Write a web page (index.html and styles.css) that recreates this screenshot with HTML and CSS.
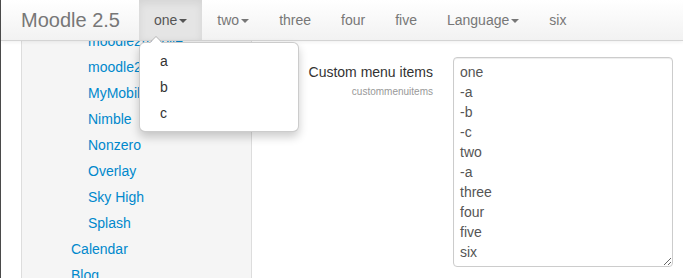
FILE: index.html
```html
<!DOCTYPE html>
<html lang="en">
<head>
    <meta charset="UTF-8">
    <meta name="viewport" content="width=device-width, initial-scale=1.0">
    <title>Moodle 2.5 - Custom menu items</title>
    <link rel="stylesheet" href="styles.css">
</head>
<body>
    <header class="navbar">
        <a class="brand" href="#">Moodle 2.5</a>
        <ul class="nav">
            <li class="nav-item dropdown open">
                <a href="#" class="nav-link active">one<span class="caret"></span></a>
                <ul class="dropdown-menu">
                    <li><a href="#">a</a></li>
                    <li><a href="#">b</a></li>
                    <li><a href="#">c</a></li>
                </ul>
            </li>
            <li class="nav-item"><a href="#" class="nav-link">two<span class="caret"></span></a></li>
            <li class="nav-item"><a href="#" class="nav-link">three</a></li>
            <li class="nav-item"><a href="#" class="nav-link">four</a></li>
            <li class="nav-item"><a href="#" class="nav-link">five</a></li>
            <li class="nav-item"><a href="#" class="nav-link">Language<span class="caret"></span></a></li>
            <li class="nav-item"><a href="#" class="nav-link">six</a></li>
        </ul>
    </header>

    <div class="page">
        <aside class="sidebar">
            <ul class="tree">
                <li class="sub"><a href="#">moodle2mobile</a></li>
                <li class="sub"><a href="#">moodle2theme</a></li>
                <li class="sub"><a href="#">MyMobile</a></li>
                <li class="sub"><a href="#">Nimble</a></li>
                <li class="sub"><a href="#">Nonzero</a></li>
                <li class="sub"><a href="#">Overlay</a></li>
                <li class="sub"><a href="#">Sky High</a></li>
                <li class="sub"><a href="#">Splash</a></li>
                <li><a href="#">Calendar</a></li>
                <li><a href="#">Blog</a></li>
            </ul>
        </aside>

        <main class="content">
            <form class="form-horizontal">
                <div class="control-group">
                    <label class="control-label" for="custommenuitems">
                        Custom menu items
                        <span class="form-shortname">custommenuitems</span>
                    </label>
                    <div class="controls">
                        <textarea id="custommenuitems" rows="10">one
-a
-b
-c
two
-a
three
four
five
six</textarea>
                    </div>
                </div>
            </form>
        </main>
    </div>
</body>
</html>
```

FILE: styles.css
```css
*{
    box-sizing: border-box;
}
body{
    margin: 0;
    height: 278px;
    overflow: hidden;
    font-family: "Liberation Sans", Arial, Helvetica, sans-serif;
    font-size: 14px;
    line-height: 20px;
    color: #333;
    background-color: #fff;
    border-left: 1px solid #4a4a4a;
}
a{
    text-decoration: none;
}
ul{
    list-style: none;
    margin: 0;
    padding: 0;
}

/* barra de navegacao */
.navbar{
    position: relative;
    z-index: 10;
    display: flex;
    align-items: center;
    height: 41px;
    padding-left: 20px;
    background-image: linear-gradient(to bottom, #ffffff, #f2f2f2);
    border-bottom: 1px solid #d4d4d4;
    box-shadow: 0 1px 4px rgba(0, 0, 0, 0.065);
}
.brand{
    font-size: 20px;
    line-height: 20px;
    color: #777;
    padding: 10px 0;
    margin-right: 19px;
}
.nav{
    display: flex;
    height: 40px;
}
.nav-item{
    position: relative;
}
.nav-link{
    display: block;
    padding: 10px 15px;
    color: #777;
    line-height: 20px;
}
.nav-link.active{
    background-color: #e5e5e5;
    color: #555;
    box-shadow: inset 0 3px 8px rgba(0, 0, 0, 0.08);
}
.caret{
    display: inline-block;
    width: 0;
    height: 0;
    margin-left: 2px;
    vertical-align: middle;
    border-top: 4px solid #777;
    border-left: 4px solid transparent;
    border-right: 4px solid transparent;
}
.active .caret{
    border-top-color: #555;
}

/* menu suspenso */
.dropdown-menu{
    position: absolute;
    top: 42px;
    left: 0;
    width: 160px;
    padding: 5px 0;
    background-color: #fff;
    border: 1px solid rgba(0, 0, 0, 0.2);
    border-radius: 6px;
    box-shadow: 0 5px 10px rgba(0, 0, 0, 0.2);
}
.dropdown-menu:before{
    content: "";
    position: absolute;
    top: -7px;
    left: 9px;
    border-left: 7px solid transparent;
    border-right: 7px solid transparent;
    border-bottom: 7px solid rgba(0, 0, 0, 0.2);
}
.dropdown-menu:after{
    content: "";
    position: absolute;
    top: -6px;
    left: 10px;
    border-left: 6px solid transparent;
    border-right: 6px solid transparent;
    border-bottom: 6px solid #fff;
}
.dropdown-menu a{
    display: block;
    padding: 3px 20px;
    color: #333;
    line-height: 20px;
}

/* pagina */
.page{
    display: flex;
    padding-left: 20px;
}
.sidebar{
    width: 231px;
    height: 240px;
    background-color: #f5f5f5;
    border-left: 1px solid #ddd;
    border-right: 1px solid #ddd;
}
.tree{
    margin-top: -13px;
    padding-left: 49px;
}
.tree li{
    padding: 3px 0;
}
.tree li.sub{
    padding-left: 17px;
}
.tree a{
    color: #0088cc;
}

.content{
    flex: 1;
    padding: 16px 0 0 21px;
}
.control-group{
    display: flex;
    gap: 20px;
}
.control-label{
    width: 160px;
    padding-top: 5px;
    text-align: right;
    color: #333;
}
.form-shortname{
    display: block;
    font-size: 10px;
    color: #999;
    line-height: 16px;
    margin-top: 2px;
}
textarea{
    width: 220px;
    height: 210px;
    padding: 4px 6px;
    font-family: "Liberation Sans", Arial, Helvetica, sans-serif;
    font-size: 14px;
    line-height: 20px;
    color: #555;
    border: 1px solid #ccc;
    border-radius: 4px;
    box-shadow: inset 0 1px 1px rgba(0, 0, 0, 0.075);
    overflow: hidden;
}
```
